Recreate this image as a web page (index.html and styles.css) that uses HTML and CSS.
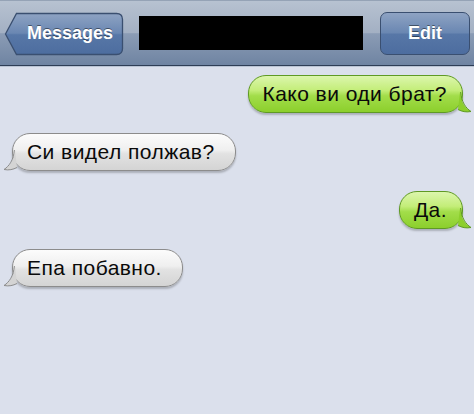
FILE: index.html
```html
<!DOCTYPE html>
<html lang="mk">
<head>
    <meta charset="UTF-8">
    <meta name="viewport" content="width=device-width, initial-scale=1.0">
    <title>Messages</title>
    <link rel="stylesheet" href="styles.css">
</head>
<body>
    <div class="navbar">
        <button class="back">
            <svg class="back-bg" width="120" height="44" viewBox="0 0 120 44">
                <defs>
                    <linearGradient id="backGrad" x1="0" y1="0" x2="0" y2="1">
                        <stop offset="0" stop-color="#8ea3c3"/>
                        <stop offset="0.48" stop-color="#6a87b2"/>
                        <stop offset="0.52" stop-color="#5777a7"/>
                        <stop offset="1" stop-color="#4d6d9f"/>
                    </linearGradient>
                </defs>
                <path d="M1.5 22 L12.5 1.5 H112.5 Q118.5 1.5 118.5 7.5 V36.5 Q118.5 42.5 112.5 42.5 H12.5 Z" fill="url(#backGrad)" stroke="#3a4f70" stroke-width="1.3"/>
            </svg>
            <span>Messages</span>
        </button>
        <div class="title"></div>
        <button class="edit">Edit</button>
    </div>

    <div class="chat">
        <div class="bubble out">Како ви оди брат?
            <svg class="tail" width="15" height="21" viewBox="0 0 15 21">
                <path d="M2 0 C3 10 7 16 13 19.5 C8 20.5 4 19.5 0 17.5 Z" fill="#8ccf2c"/>
                <path d="M2.6 0 C3.6 10 7.6 16 13 19.5 C8 20.5 4 19.5 0 17.5" fill="none" stroke="#5f9a24" stroke-width="1"/>
            </svg>
        </div>
        <div class="bubble in">Си видел полжав?
            <svg class="tail" width="15" height="21" viewBox="0 0 15 21">
                <path d="M13 0 C12 10 8 16 2 19.5 C7 20.5 11 19.5 15 17.5 Z" fill="#d4d4d4"/>
                <path d="M12.4 0 C11.4 10 7.4 16 2 19.5 C7 20.5 11 19.5 15 17.5" fill="none" stroke="#8c8c8c" stroke-width="1"/>
            </svg>
        </div>
        <div class="bubble out">Да.
            <svg class="tail" width="15" height="21" viewBox="0 0 15 21">
                <path d="M2 0 C3 10 7 16 13 19.5 C8 20.5 4 19.5 0 17.5 Z" fill="#8ccf2c"/>
                <path d="M2.6 0 C3.6 10 7.6 16 13 19.5 C8 20.5 4 19.5 0 17.5" fill="none" stroke="#5f9a24" stroke-width="1"/>
            </svg>
        </div>
        <div class="bubble in">Епа побавно.
            <svg class="tail" width="15" height="21" viewBox="0 0 15 21">
                <path d="M13 0 C12 10 8 16 2 19.5 C7 20.5 11 19.5 15 17.5 Z" fill="#d4d4d4"/>
                <path d="M12.4 0 C11.4 10 7.4 16 2 19.5 C7 20.5 11 19.5 15 17.5" fill="none" stroke="#8c8c8c" stroke-width="1"/>
            </svg>
        </div>
    </div>
</body>
</html>
```

FILE: styles.css
```css
body {
    margin: 0;
    background: #dbe0ec;
    font-family: "Liberation Sans", Arial, sans-serif;
    height: 414px;
    overflow: hidden;
}
.navbar {
    height: 66px;
    display: flex;
    align-items: center;
    padding: 0 4px 0 4px;
    background: linear-gradient(#b7c2d1, #a3b0c3 50%, #8b9cb5 51%, #6f84a2);
    border-top: 1px solid #95a3b6;
    border-bottom: 1px solid #2d3d55;
    box-sizing: border-box;
    box-shadow: 0 1px 0 #b9c3d3;
}
.back {
    position: relative;
    width: 120px;
    height: 44px;
    margin-top: 1px;
    padding: 0 0 0 12px;
    border: none;
    background: none;
    color: white;
    font-family: inherit;
    font-size: 18px;
    font-weight: bold;
    text-shadow: 0 -1px 0 rgba(0, 0, 0, 0.45);
}
.back-bg {
    position: absolute;
    left: 0;
    top: 0;
}
.back span {
    position: relative;
}
.title {
    width: 224px;
    height: 34px;
    margin: -1px 0 0 15px;
    background: #000;
}
.edit {
    width: 90px;
    height: 43px;
    margin: 1px 0 0 17px;
    border: 1px solid #3a4f70;
    border-radius: 7px;
    background: linear-gradient(#8ea3c3, #6a87b2 48%, #5777a7 52%, #4d6d9f);
    color: white;
    font-family: inherit;
    font-size: 18px;
    font-weight: bold;
    text-shadow: 0 -1px 0 rgba(0, 0, 0, 0.45);
}
.chat {
    display: flex;
    flex-direction: column;
    gap: 20px;
    padding: 9px 0 0 0;
}
.bubble {
    position: relative;
    font-size: 21px;
    letter-spacing: 0.45px;
    line-height: 24px;
    padding: 6px 15px 6px 14px;
    border-radius: 18px;
    color: #0a0a0a;
    box-shadow: 0 2px 2px rgba(0, 0, 0, 0.22);
}
.bubble.out {
    align-self: flex-end;
    margin-right: 11px;
    border: 1px solid #5f9a24;
    background: linear-gradient(#dcf6ad, #c3ed78 40%, #a2dd4a 55%, #8ccf2c);
}
.bubble.in {
    align-self: flex-start;
    margin-left: 12px;
    padding: 6px 20px 6px 14px;
    border: 1px solid #8c8c8c;
    background: linear-gradient(#fcfcfc, #efefef 45%, #e2e2e2 55%, #d4d4d4);
}
.tail {
    position: absolute;
    bottom: -1px;
}
.out .tail {
    right: -11px;
}
.in .tail {
    left: -11px;
}
```
